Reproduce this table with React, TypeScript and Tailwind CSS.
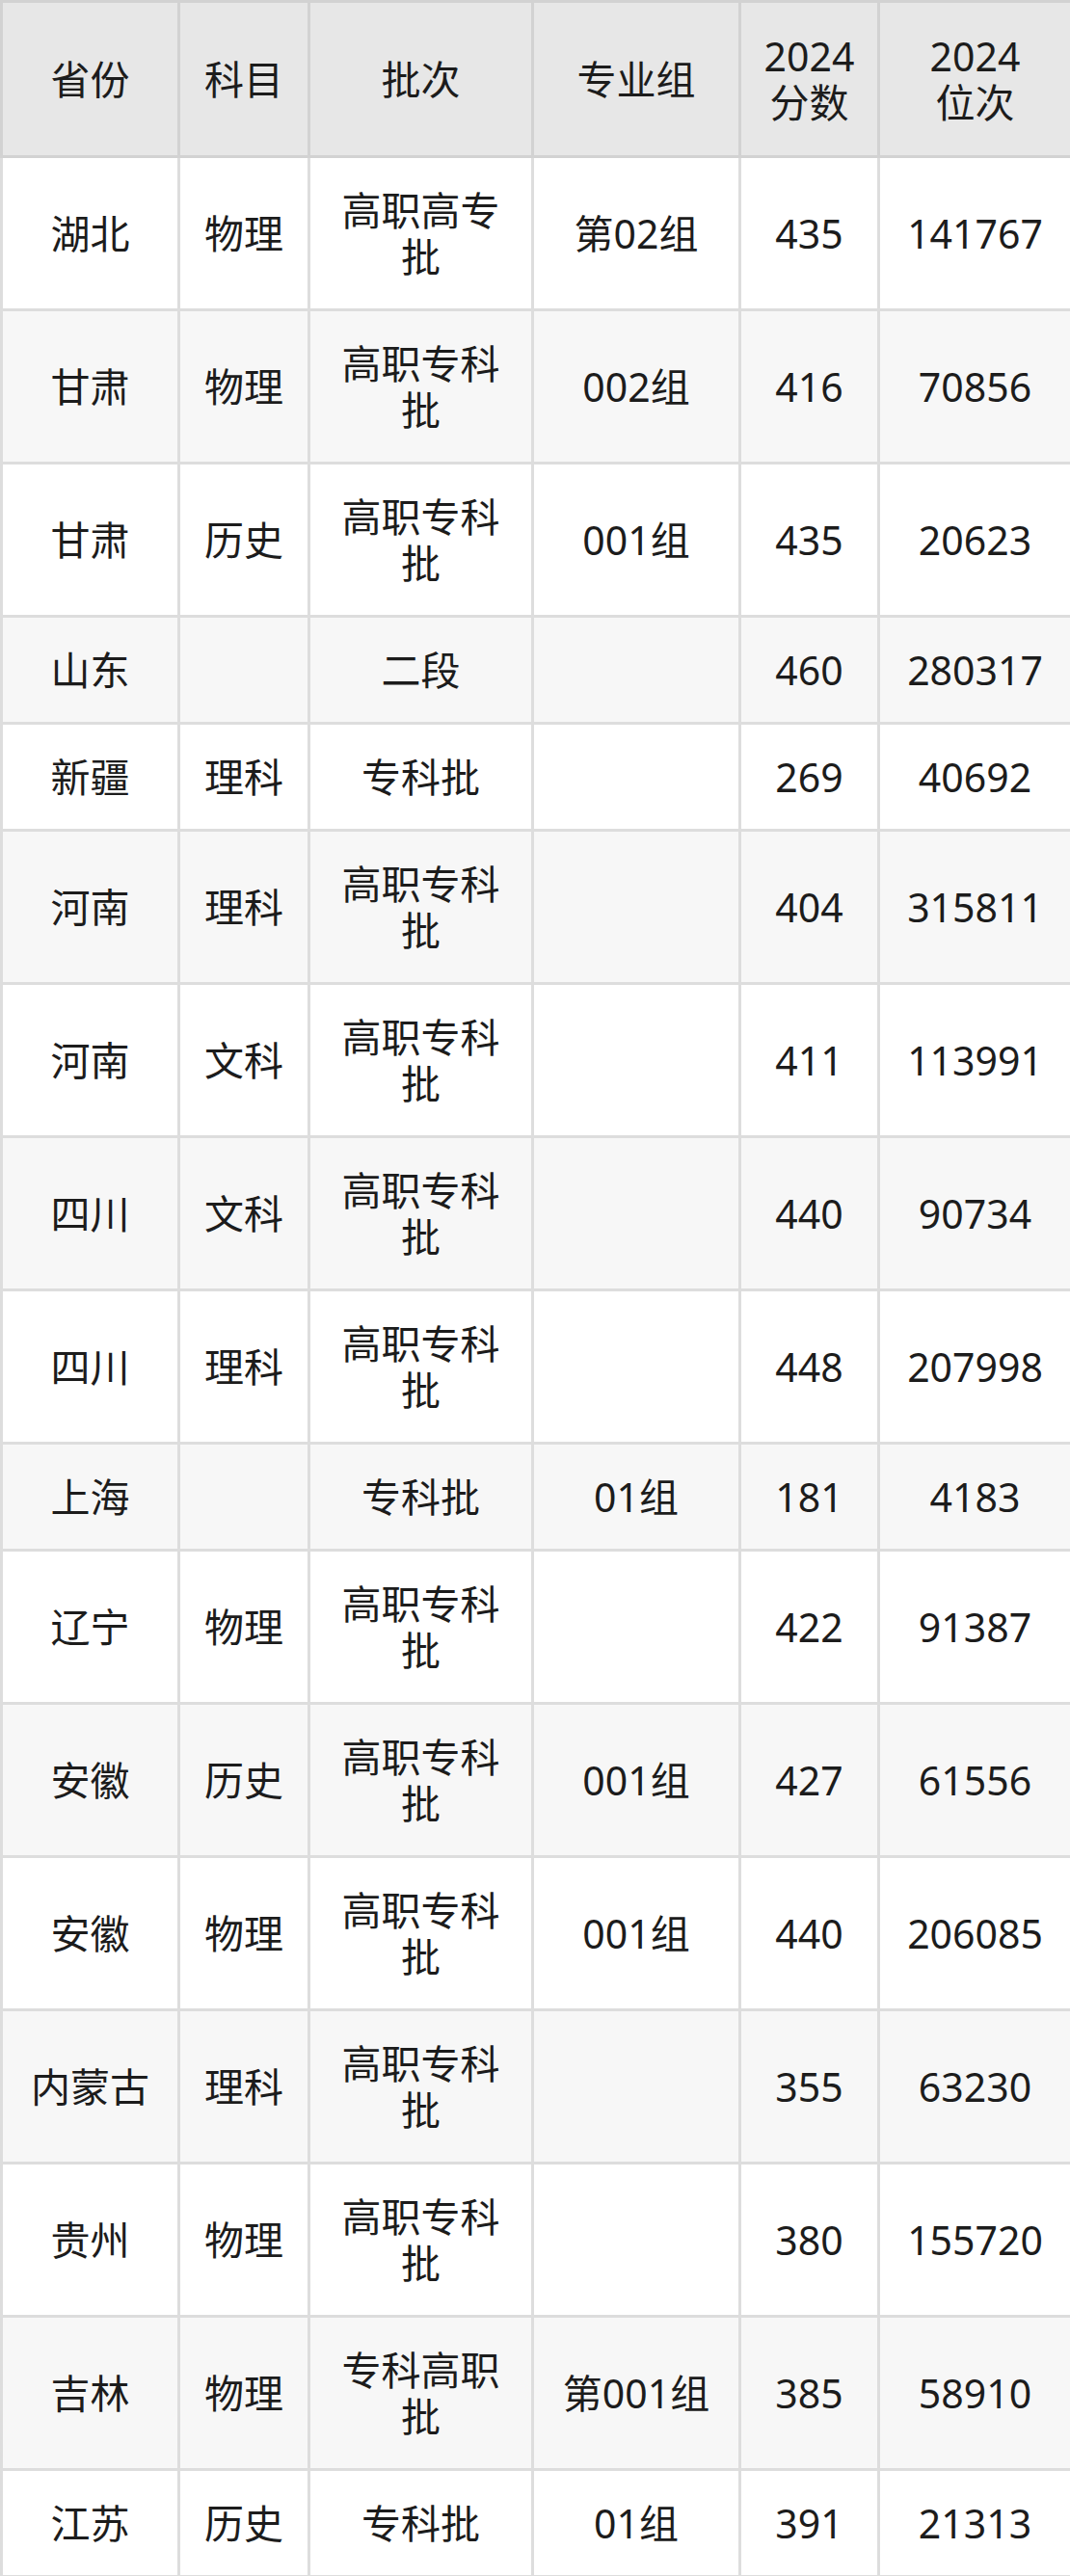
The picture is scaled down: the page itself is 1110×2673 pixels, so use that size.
const HEAD = ["省份", "科目", "批次", "专业组", "2024\n分数", "2024\n位次"];

const ROWS = [
  ["湖北", "物理", "高职高专批", "第02组", "435", "141767"],
  ["甘肃", "物理", "高职专科批", "002组", "416", "70856"],
  ["甘肃", "历史", "高职专科批", "001组", "435", "20623"],
  ["山东", "", "二段", "", "460", "280317"],
  ["新疆", "理科", "专科批", "", "269", "40692"],
  ["河南", "理科", "高职专科批", "", "404", "315811"],
  ["河南", "文科", "高职专科批", "", "411", "113991"],
  ["四川", "文科", "高职专科批", "", "440", "90734"],
  ["四川", "理科", "高职专科批", "", "448", "207998"],
  ["上海", "", "专科批", "01组", "181", "4183"],
  ["辽宁", "物理", "高职专科批", "", "422", "91387"],
  ["安徽", "历史", "高职专科批", "001组", "427", "61556"],
  ["安徽", "物理", "高职专科批", "001组", "440", "206085"],
  ["内蒙古", "理科", "高职专科批", "", "355", "63230"],
  ["贵州", "物理", "高职专科批", "", "380", "155720"],
  ["吉林", "物理", "专科高职批", "第001组", "385", "58910"],
  ["江苏", "历史", "专科批", "01组", "391", "21313"],
];

const App = () => {
  return (
    <div
      className="w-[1110px] bg-white text-[#1c1c1c]"
      style={{ fontFamily: '"Noto Sans", "Noto Sans CJK SC", sans-serif' }}
    >
      <table className="w-full border-collapse table-fixed text-[41px] leading-[48px]">
        <colgroup>
          <col className="w-[184px]" />
          <col className="w-[135px]" />
          <col className="w-[232px]" />
          <col className="w-[215px]" />
          <col className="w-[144px]" />
          <col className="w-[200px]" />
        </colgroup>
        <thead>
          <tr className="bg-[#e7e7e7]">
            {HEAD.map((h, i) => (
              <th
                key={i}
                className="border-[3px] border-[#d2d2d2] px-[18px] py-[31px] font-normal text-center whitespace-pre-line"
              >
                {h}
              </th>
            ))}
          </tr>
        </thead>
        <tbody>
          {ROWS.map((row, r) => (
            <tr key={r} className={r % 2 === 0 ? "bg-white" : "bg-[#f7f7f7]"}>
              {row.map((cell, c) => (
                <td
                  key={c}
                  className="border-[3px] border-[#dddddd] px-[18px] py-[30px] text-center"
                >
                  {cell}
                </td>
              ))}
            </tr>
          ))}
        </tbody>
      </table>
    </div>
  );
};

export default App;
